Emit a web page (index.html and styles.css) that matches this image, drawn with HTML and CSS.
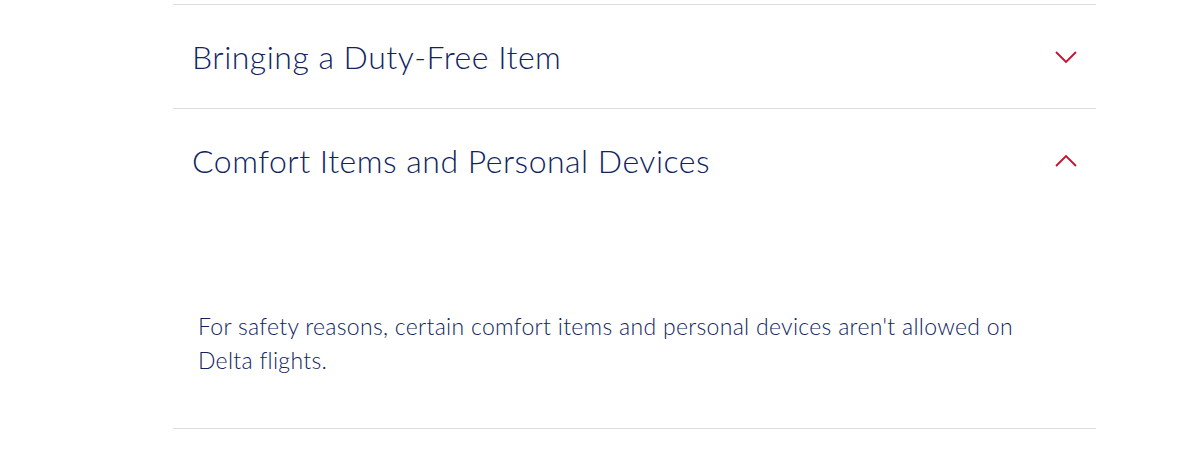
FILE: index.html
```html
<!DOCTYPE html>
<html lang="en">
<head>
  <meta charset="UTF-8">
  <meta name="viewport" content="width=device-width, initial-scale=1.0">
  <title>Prohibited Items</title>
  <link rel="stylesheet" href="styles.css">
</head>
<body>
  <!-- Accordion -->
  <div class="accordion">
    <div class="accordion-item">
      <div class="accordion-header">
        <h2 class="accordion-title">Bringing a Duty-Free Item</h2>
        <svg class="chevron" viewBox="0 0 24 14" width="24" height="14" fill="none" stroke="currentColor" stroke-width="1.8"><polyline points="2 2 12 12 22 2"></polyline></svg>
      </div>
    </div>

    <div class="accordion-item open">
      <div class="accordion-header">
        <h2 class="accordion-title">Comfort Items and Personal Devices</h2>
        <svg class="chevron" viewBox="0 0 24 14" width="24" height="14" fill="none" stroke="currentColor" stroke-width="1.8"><polyline points="2 12 12 2 22 12"></polyline></svg>
      </div>
      <div class="accordion-panel">
        <p>For safety reasons, certain comfort items and personal devices aren't allowed on Delta flights.</p>
      </div>
    </div>
  </div>
</body>
</html>
```

FILE: styles.css
```css
* {
  margin: 0;
  padding: 0;
  box-sizing: border-box;
}

body {
  background-color: #ffffff;
  font-family: Lato, 'Open Sans', sans-serif;
  color: #10245f;
}

.accordion {
  width: 923px;
  margin-left: 173px;
  padding-top: 4px;
}

.accordion-item {
  border-top: 1px solid #dddddd;
}

.accordion-item:last-child {
  border-bottom: 1px solid #dddddd;
}

.accordion-header {
  height: 103px;
  padding: 0 18px 0 19px;
  display: flex;
  align-items: center;
  justify-content: space-between;
}

.accordion-title {
  font-size: 32px;
  font-weight: 300;
  letter-spacing: 0.5px;
}

.chevron {
  color: #c8102e;
}

.accordion-panel {
  padding: 97px 25px 51px;
}

.accordion-panel p {
  font-size: 23px;
  font-weight: 300;
  line-height: 34px;
  letter-spacing: 0.3px;
  max-width: 830px;
}
```
